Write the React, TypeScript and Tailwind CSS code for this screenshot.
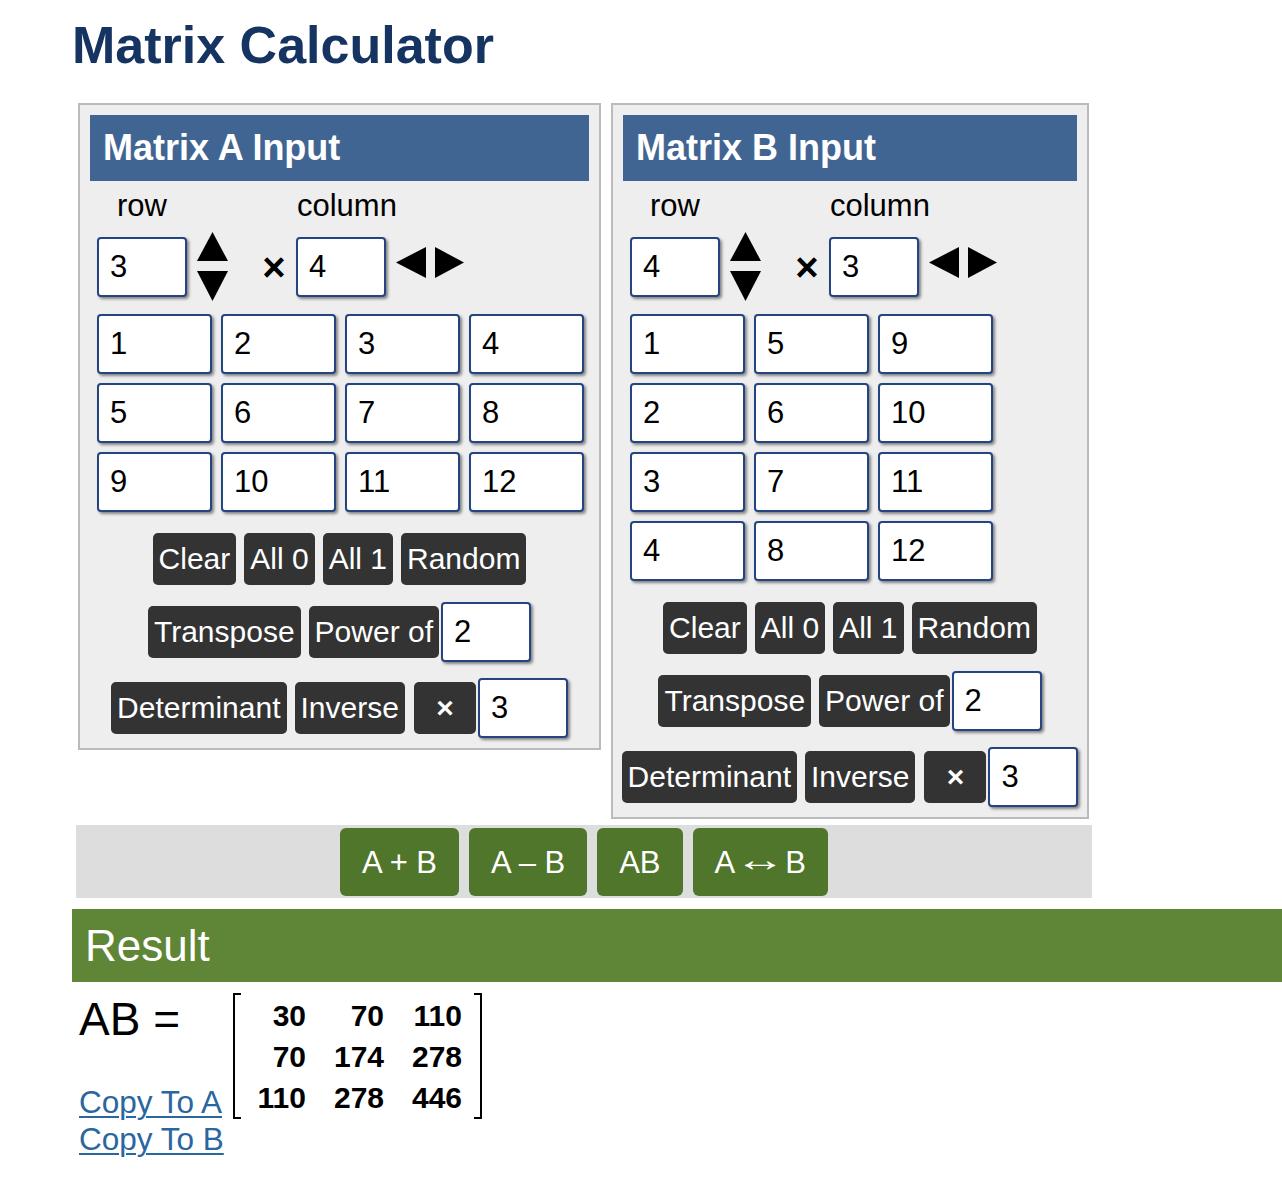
import React from 'react';

type Grid = string[][];

function Box({ value, className = '' }: { value: string; className?: string }) {
  return (
    <input
      readOnly
      value={value}
      className={`h-[60px] flex-none rounded-[4px] border-2 border-[#24457f] bg-white pl-[11px] text-[31px] text-black shadow-[2px_2px_3px_rgba(0,0,0,0.45)] outline-none ${className}`}
    />
  );
}

function Btn({ children, className = '' }: { children: React.ReactNode; className?: string }) {
  return (
    <button className={`h-[52px] flex-none rounded-[5px] bg-[#333333] px-[6px] text-[30px] leading-none text-white ${className}`}>
      {children}
    </button>
  );
}

function GreenBtn({ children }: { children: React.ReactNode }) {
  return (
    <button className="flex h-[68px] items-center rounded-[6px] bg-[#4f762b] px-[22px] text-[31px] leading-none text-white">
      {children}
    </button>
  );
}

function Panel({
  name,
  rows,
  cols,
  data,
  width,
  gridCols,
}: {
  name: string;
  rows: string;
  cols: string;
  data: Grid;
  width: string;
  gridCols: string;
}) {
  return (
    <div className={`flex-none border-2 border-[#bbbbbb] bg-[#eeeeee] p-[10px] ${width}`}>
      <div className="flex h-[66px] items-center bg-[#416593] pl-[13px] text-[36px] font-bold text-white">
        Matrix {name} Input
      </div>
      <div className="flex h-[56px] items-center pb-[6px] text-[31px] text-black">
        <span className="ml-[27px]">row</span>
        <span className="ml-[130px]">column</span>
      </div>

      {/* size controls */}
      <div className="ml-[7px] flex h-[60px] items-start">
        <Box value={rows} className="w-[90px]" />
        <svg className="-mt-[5px] ml-[10px] flex-none" width="31" height="69" viewBox="0 0 31 69">
          <polygon points="0,29 15.5,0 31,29" fill="#000" />
          <polygon points="0,39 31,39 15.5,69" fill="#000" />
        </svg>
        <div className="flex h-[60px] w-[68px] flex-none items-center justify-center pl-[24px] text-[40px] font-bold text-black">
          ×
        </div>
        <Box value={cols} className="w-[90px]" />
        <svg className="ml-[10px] mt-[10px] flex-none" width="68" height="31" viewBox="0 0 68 31">
          <polygon points="0,15.5 30,0 30,31" fill="#000" />
          <polygon points="39,0 68,15.5 39,31" fill="#000" />
        </svg>
      </div>

      {/* cells */}
      <div className={`ml-[7px] mt-[17px] grid w-fit gap-[9px] ${gridCols}`}>
        {data.flat().map((v, i) => (
          <Box key={i} value={v} className="w-[115px]" />
        ))}
      </div>

      <div className="mt-[21px] flex flex-col items-center">
        <div className="flex gap-[8px]">
          <Btn>Clear</Btn>
          <Btn>All 0</Btn>
          <Btn>All 1</Btn>
          <Btn>Random</Btn>
        </div>
        <div className="mt-[17px] flex items-center gap-[8px]">
          <Btn>Transpose</Btn>
          <div className="flex items-center gap-[2px]">
            <Btn>Power of</Btn>
            <Box value="2" className="w-[90px]" />
          </div>
        </div>
        <div className="mt-[16px] flex items-center gap-[8px]">
          <Btn>Determinant</Btn>
          <Btn>Inverse</Btn>
          <div className="ml-[1px] flex items-center gap-[2px]">
            <Btn className="w-[62px] text-[26px] font-bold">×</Btn>
            <Box value="3" className="w-[90px]" />
          </div>
        </div>
      </div>
    </div>
  );
}

const A: Grid = [
  ['1', '2', '3', '4'],
  ['5', '6', '7', '8'],
  ['9', '10', '11', '12'],
];

const B: Grid = [
  ['1', '5', '9'],
  ['2', '6', '10'],
  ['3', '7', '11'],
  ['4', '8', '12'],
];

const result = [
  [30, 70, 110],
  [70, 174, 278],
  [110, 278, 446],
];

export default function App() {
  return (
    <div className="min-h-[1182px] w-[1282px] overflow-hidden bg-white pl-[72px] pt-[15px] font-['Liberation_Sans',Arial,sans-serif] text-black">
      <h1 className="h-[60px] text-[52px] font-bold leading-[60px] text-[#163461]">Matrix Calculator</h1>

      <div className="ml-[6px] mt-[28px] flex items-start gap-[10px]">
        <Panel name="A" rows="3" cols="4" data={A} width="w-[523px]" gridCols="grid-cols-[repeat(4,115px)]" />
        <Panel name="B" rows="4" cols="3" data={B} width="w-[478px]" gridCols="grid-cols-[repeat(3,115px)]" />
      </div>

      {/* operations */}
      <div className="ml-[4px] mt-[6px] flex h-[73px] w-[1016px] items-start justify-center gap-[10px] bg-[#dddddd] pt-[3px]">
        <GreenBtn>A + B</GreenBtn>
        <GreenBtn>A – B</GreenBtn>
        <GreenBtn>AB</GreenBtn>
        <GreenBtn>
          A<span className="mx-[8px] inline-block -translate-y-[3px] scale-x-[1.5] text-[34px] leading-none">↔</span>B
        </GreenBtn>
      </div>

      <div className="mt-[11px] flex h-[73px] items-center bg-[#5f8537] pl-[13px] text-[44px] text-white">Result</div>

      <div className="ml-[7px] mt-[11px] flex items-start">
        <div className="flex w-[154px] flex-none flex-col">
          <div className="mt-[1px] text-[46px] leading-[50px]">AB =</div>
          <div className="mt-[40px] flex flex-col items-start text-[31.5px] leading-[37px] text-[#2a67a0]">
            <a href="#" className="underline decoration-2 underline-offset-[3px]">Copy To A</a>
            <a href="#" className="underline decoration-2 underline-offset-[3px]">Copy To B</a>
          </div>
        </div>
        <div className="flex">
          <div className="w-[8px] border-y-2 border-l-2 border-black" />
          <div className="grid grid-cols-[repeat(3,50px)] gap-x-[28px] pb-[1px] pl-[15px] pr-[12px] pt-[2px] text-[30px] font-bold leading-[41px]">
            {result.flat().map((v, i) => (
              <div key={i} className="text-right">
                {v}
              </div>
            ))}
          </div>
          <div className="w-[8px] border-y-2 border-r-2 border-black" />
        </div>
      </div>
    </div>
  );
}
